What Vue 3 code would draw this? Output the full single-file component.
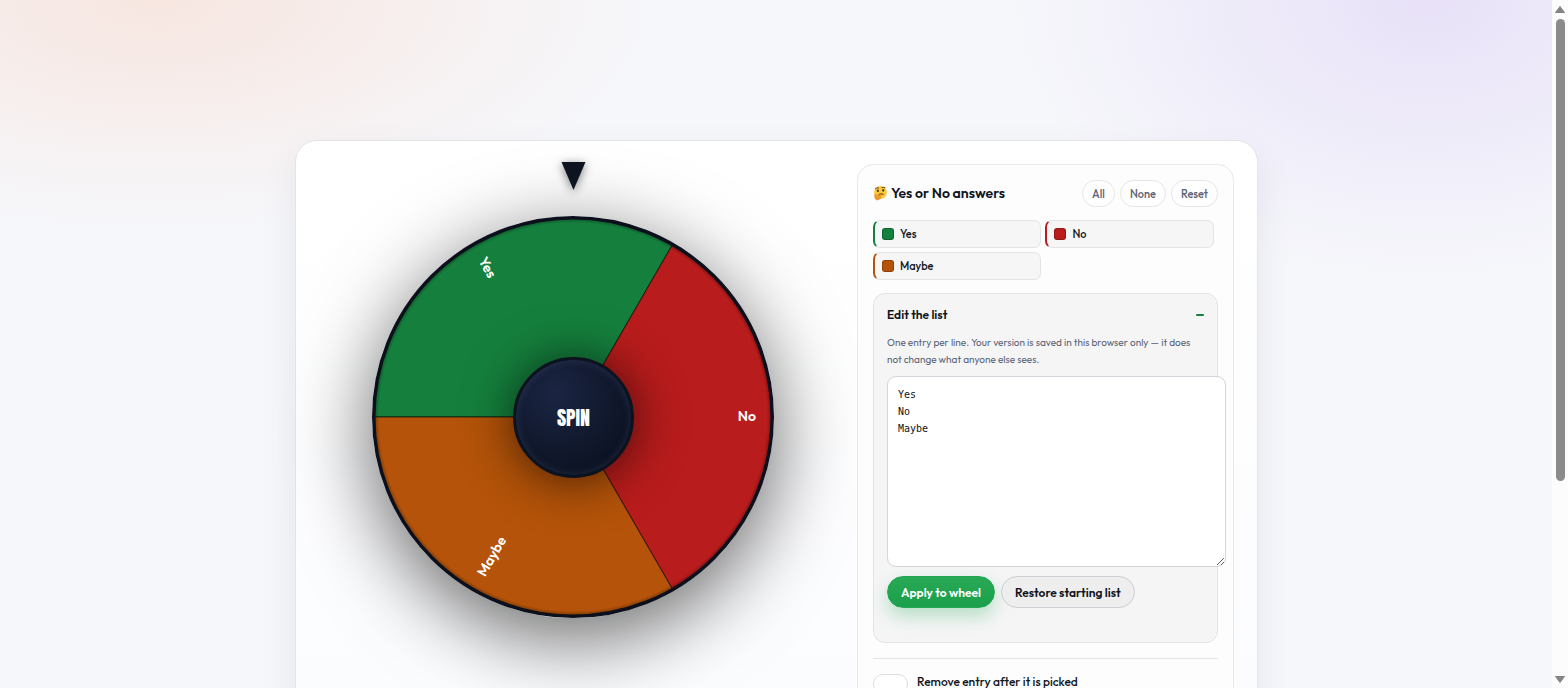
<script setup>
import { ref } from 'vue'

const starting = [
  { name: 'Yes', color: '#15803d' },
  { name: 'No', color: '#b91c1c' },
  { name: 'Maybe', color: '#b45309' },
]
const draft = ref(starting.map((e) => e.name).join('\n'))
const removePicked = ref(false)
const restore = () => {
  draft.value = starting.map((e) => e.name).join('\n')
}
</script>

<template>
  <div class="window">
    <main class="page">
      <section class="card">
        <div class="stage">
          <svg class="pointer" viewBox="0 0 24 28" aria-hidden="true">
            <path d="M0 0H24L12 28Z" fill="#0d1420" />
          </svg>
          <div class="wheel">
            <svg class="disc" viewBox="-200 -200 400 400" role="img" aria-label="Wheel">
              <defs>
                <radialGradient id="rim" gradientUnits="userSpaceOnUse" cx="0" cy="0" r="200">
                  <stop offset="0.965" stop-color="#000" stop-opacity="0" />
                  <stop offset="0.99" stop-color="#000" stop-opacity="0.35" />
                </radialGradient>
              </defs>
              <g stroke="#000" stroke-opacity="0.6" stroke-width="1">
                <path d="M0 0L-198 0A198 198 0 0 1 99 -171.5Z" fill="#15803d" />
                <path d="M0 0L99 -171.5A198 198 0 0 1 99 171.5Z" fill="#b91c1c" />
                <path d="M0 0L99 171.5A198 198 0 0 1 -198 0Z" fill="#b45309" />
              </g>
              <circle r="198" fill="url(#rim)" />
              <circle r="198.25" fill="none" stroke="#0b101c" stroke-width="3.5" />
              <g class="slice-labels">
                <text x="-182" y="4" transform="rotate(60)">Yes</text>
                <text x="182" y="4" text-anchor="end">No</text>
                <text x="-182" y="4" transform="rotate(-60)">Maybe</text>
              </g>
            </svg>
            <button class="hub" type="button">SPIN</button>
          </div>
        </div>

        <aside class="panel">
          <header class="head">
            <h2>
              <svg class="emoji" viewBox="0 0 28 28" aria-hidden="true">
                <circle cx="14" cy="13" r="12" fill="#fcc93c" />
                <path d="M4 7Q7 3 11 5M16 4Q20 2 23 5" stroke="#69471a" stroke-width="2" fill="none" />
                <ellipse cx="9" cy="10" rx="2" ry="2.5" fill="#513c22" />
                <ellipse cx="19" cy="9" rx="2" ry="2.5" fill="#513c22" />
                <path d="M10 18Q15 14 20 17" stroke="#76501d" stroke-width="2" fill="none" />
                <path d="M3 18Q5 14 7 19L14 17Q18 17 13 20L15 22Q13 27 8 27Q3 27 3 18Z" fill="#f19a2a" stroke="#dc8422" />
              </svg>
              <span>Yes or No answers</span>
            </h2>
            <div class="quick">
              <button type="button">All</button>
              <button type="button">None</button>
              <button type="button">Reset</button>
            </div>
          </header>

          <ul class="entries">
            <li v-for="e in starting" :key="e.name" :style="{ borderLeftColor: e.color }">
              <span class="swatch" :style="{ background: e.color }"></span>
              <span>{{ e.name }}</span>
            </li>
          </ul>

          <details class="editor" open>
            <summary><span>Edit the list</span><span class="minus"></span></summary>
            <label class="hint" for="entries">One entry per line. Your version is saved in this browser only — it does not change what anyone else sees.</label>
            <textarea id="entries" v-model="draft" spellcheck="false"></textarea>
            <div class="actions">
              <button class="apply" type="button">Apply to wheel</button>
              <button class="restore" type="button" @click="restore">Restore starting list</button>
            </div>
          </details>

          <div class="options">
            <input id="remove" v-model="removePicked" type="checkbox" />
            <label for="remove">Remove entry after it is picked</label>
          </div>
        </aside>
      </section>
    </main>
    <div class="scrollbar" aria-hidden="true">
      <svg viewBox="0 0 10 7"><path d="M5 0.5L9.5 6.5H0.5Z" fill="#858585" stroke="#858585" stroke-linejoin="round" /></svg>
      <div class="track"><div class="thumb"></div></div>
      <svg viewBox="0 0 10 7"><path d="M5 6.5L0.5 0.5H9.5Z" fill="#858585" stroke="#858585" stroke-linejoin="round" /></svg>
    </div>
  </div>
</template>

<style>
body {
  overflow: hidden;
}
</style>

<style scoped>
.window {
  display: grid;
  grid-template-columns: minmax(0, 1fr) 16px;
  height: 100vh;
  overflow: hidden;
  font-family: Outfit, Lato, "Liberation Sans", sans-serif;
  color: #0f1420;
}
.page {
  overflow: hidden;
  padding: 140px 24px 0 25px;
  background:
    radial-gradient(500px 230px at 10% 0, #f7e6e0, rgba(247, 230, 224, 0)),
    radial-gradient(420px 280px at 92% 0, #e8e1f8, rgba(232, 225, 248, 0)),
    #f6f7fb;
}
.card {
  box-sizing: border-box;
  max-width: 963px;
  min-height: 900px;
  margin: 0 auto;
  padding: 23px 23px 23px 22px;
  display: grid;
  grid-template-columns: 1.35fr 1fr;
  align-items: start;
  gap: 30px;
  border: 1px solid #e4e5e9;
  border-radius: 22px;
  background: linear-gradient(#ffffff, #fafbfe);
  box-shadow: 0 16px 40px rgba(20, 30, 60, 0.07);
}
.stage {
  display: flex;
  flex-direction: column;
  align-items: center;
  padding-left: 2px;
}
.pointer {
  width: 25px;
  height: 28px;
  margin: -2px 0 26px;
  z-index: 1;
  filter: drop-shadow(0 2px 5px rgba(0, 0, 0, 0.5));
}
.wheel {
  display: grid;
  place-items: center;
  width: 100%;
  max-width: 402px;
  border-radius: 50%;
  box-shadow: 0 20px 80px rgba(0, 0, 0, 0.6);
}
.disc {
  grid-area: 1 / 1;
  display: block;
  width: 100%;
}
.slice-labels {
  fill: #fff;
  font-size: 14px;
  font-weight: 600;
}
.hub {
  grid-area: 1 / 1;
  box-sizing: border-box;
  width: 121px;
  height: 121px;
  padding: 0;
  border: 3px solid #0c121e;
  border-radius: 50%;
  background: radial-gradient(circle at 35% 30%, #1b2543, #0b1120 80%);
  box-shadow:
    0 2px 50px rgba(0, 0, 0, 0.65),
    inset 0 0 8px rgba(120, 150, 210, 0.2);
  color: #fff;
  font: 400 20px Anton, Impact, "Liberation Sans Narrow", "DejaVu Sans Condensed", sans-serif;
}
.panel {
  box-sizing: border-box;
  padding: 15px;
  border: 1px solid #e8e9ed;
  border-radius: 16px;
  background: #fdfdfe;
}
.head {
  display: flex;
  align-items: center;
  justify-content: space-between;
}
.head h2 {
  display: flex;
  align-items: center;
  gap: 3px;
  margin: 0;
  padding-bottom: 2px;
  font-size: 14px;
  font-weight: 600;
  line-height: 18px;
}
.emoji {
  width: 15px;
  height: 16px;
}
.quick {
  display: flex;
  gap: 5px;
}
.quick button {
  height: 27px;
  padding: 0 9px;
  border: 1px solid #e4e5ea;
  border-radius: 14px;
  background: #fff;
  color: #5b6275;
  font: inherit;
  font-size: 11px;
  font-weight: 500;
}
.entries {
  display: grid;
  grid-template-columns: 1fr 1fr;
  gap: 4px;
  margin: 13px 0;
  padding: 0 4px 0 0;
  list-style: none;
}
.entries li {
  box-sizing: border-box;
  display: flex;
  align-items: center;
  gap: 6px;
  height: 28px;
  padding: 0 7px;
  border: 1px solid #e3e4e8;
  border-left-width: 2px;
  border-radius: 7px;
  background: #f6f6f7;
  font-size: 11px;
  font-weight: 500;
}
.swatch {
  box-sizing: border-box;
  width: 12px;
  height: 12px;
  border: 1px solid rgba(0, 0, 0, 0.2);
  border-radius: 3px;
}
.editor {
  padding: 13px 13px 34px;
  border: 1px solid #e2e3e6;
  border-radius: 12px;
  background: #f5f5f6;
}
.editor summary {
  display: flex;
  align-items: center;
  justify-content: space-between;
  list-style: none;
  font-size: 12px;
  font-weight: 600;
  line-height: 15px;
}
.minus {
  width: 8px;
  height: 2px;
  border-radius: 1px;
  background: #15803d;
}
.hint {
  display: block;
  margin: 12px 0 8px;
  color: #5b6577;
  font-size: 10px;
  font-weight: 400;
  line-height: 17px;
}
.editor textarea {
  display: block;
  box-sizing: content-box;
  width: 100%;
  height: 171px;
  margin: 0 0 9px;
  padding: 9px 10px;
  border: 1px solid #d3d5da;
  border-radius: 9px;
  background: #fff;
  color: #0f1420;
  font: 10px/17px "DejaVu Sans Mono", monospace;
  resize: vertical;
}
.actions {
  display: flex;
  gap: 6px;
}
.actions button {
  height: 32px;
  padding: 0 13px;
  border: 1px solid transparent;
  border-radius: 16px;
  font: inherit;
  font-size: 12px;
  font-weight: 600;
  white-space: nowrap;
}
.actions .apply {
  border-color: #22a653;
  background: linear-gradient(#28a956, #1b9f4a);
  color: #fff;
  box-shadow: 0 8px 18px rgba(34, 170, 84, 0.3);
}
.actions .restore {
  border-color: #cdced3;
  background: #eeeeef;
  color: #0f1420;
}
.options {
  display: flex;
  align-items: flex-start;
  gap: 9px;
  margin-top: 15px;
  padding-top: 15px;
  border-top: 1px solid #e4e5e9;
  font-size: 12px;
  font-weight: 500;
  line-height: 15px;
}
.options input {
  appearance: none;
  box-sizing: border-box;
  width: 35px;
  height: 20px;
  margin: 0;
  border: 1px solid #dcdde1;
  border-radius: 10px;
  background: #fff;
}
.scrollbar {
  display: flex;
  flex-direction: column;
  align-items: center;
  gap: 6px;
  padding: 6px 0 5px;
  background: #fcfcfc;
}
.scrollbar svg {
  width: 10px;
  height: 7px;
}
.track {
  flex: 1;
}
.thumb {
  width: 9px;
  height: 71%;
  border-radius: 5px;
  background: #8b8b8b;
}
</style>
